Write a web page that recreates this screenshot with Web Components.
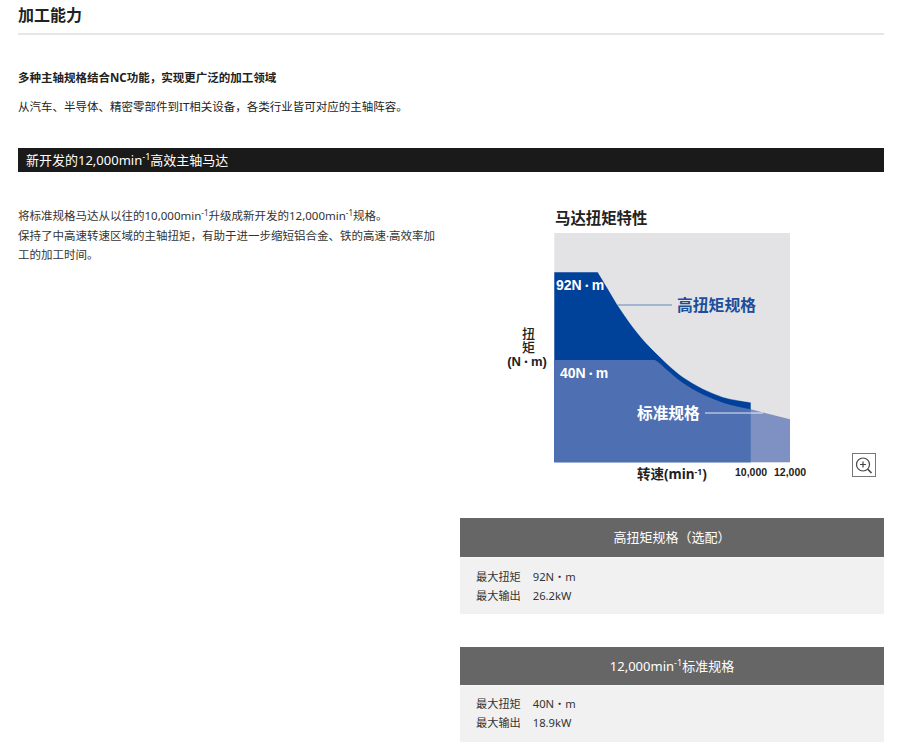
<!DOCTYPE html>
<html lang="zh-CN"><head><meta charset="utf-8"><title>加工能力</title>
<style>
html,body{margin:0;background:#fff}
body{font-family:"Noto Sans","Noto Sans CJK SC",sans-serif;color:#222;width:900px;height:755px;overflow:hidden}
</style></head><body>
<x-page>
  <x-heading>加工能力</x-heading>
  <x-lead>
    <span slot="strong">多种主轴规格结合NC功能，实现更广泛的加工领域</span>
    从汽车、半导体、精密零部件到IT相关设备，各类行业皆可对应的主轴阵容。
  </x-lead>
  <x-bar>新开发的12,000min<x-sup>-1</x-sup>高效主轴马达</x-bar>
  <x-columns>
    <x-copy slot="left">将标准规格马达从以往的10,000min<x-sup>-1</x-sup>升级成新开发的12,000min<x-sup>-1</x-sup>规格。<br>保持了中高速转速区域的主轴扭矩，有助于进一步缩短铝合金、铁的高速·高效率加工的加工时间。</x-copy>
    <x-torque-chart slot="right"></x-torque-chart>
    <x-spec-card slot="right" torque="92N・m" power="26.2kW" gap="33" head="40" pad="8.5">高扭矩规格（选配）</x-spec-card>
    <x-spec-card slot="right" torque="40N・m" power="18.9kW" head="39" pad="7.5">12,000min<x-sup>-1</x-sup>标准规格</x-spec-card>
  </x-columns>
</x-page>
<script>
function def(name, css, html){
  customElements.define(name, class extends HTMLElement{
    constructor(){super();const r=this.attachShadow({mode:'open'});r.innerHTML='<style>'+css+'</style>'+(typeof html==='function'?html(this):html);}
    connectedCallback(){
      if(typeof html==='function'){this.shadowRoot.innerHTML='<style>'+css+'</style>'+html(this);}
      if(this.getAttribute('gap'))this.style.marginBottom=this.getAttribute('gap')+'px';
    }
  });
}
const FONT='"Noto Sans","Noto Sans CJK SC",sans-serif';
const ARIAL='"Liberation Sans","Noto Sans CJK SC",sans-serif';
def('x-page',':host{display:block;padding:0 16px 0 18px;font-family:'+FONT+'}','<slot></slot>');
def('x-heading',':host{display:block;height:33px;border-bottom:2px solid #e6e6e6;font-size:16px;font-weight:700;line-height:30px;color:#222}','<slot></slot>');
def('x-sup',':host{font-size:.7em;position:relative;top:-.5em;line-height:0}','<slot></slot>');
def('x-lead',':host{display:block;padding-top:33px;height:80px;font-size:11.5px;line-height:20px;color:#222}strong{display:block;font-size:11.5px;font-weight:700;margin-bottom:9px}','<strong><slot name="strong"></slot></strong><slot></slot>');
def('x-bar',':host{display:block;height:24px;line-height:24px;background:#1a1a1a;color:#fff;font-size:13px;padding-left:8px}','<slot></slot>');
def('x-columns',':host{display:grid;grid-template-columns:424px 424px;gap:18px;padding-top:28px}.c{display:flex;flex-direction:column}','<div class="c"><slot name="left"></slot></div><div class="c"><slot name="right"></slot></div>');
def('x-copy',':host{display:block;font-size:11.5px;line-height:19.6px;color:#333;padding-top:6px}','<slot></slot>');
def('x-zoom-button',':host{display:block;position:absolute;left:392px;top:253px;width:24px;height:24px;box-sizing:border-box;border:1px solid #777;background:#fff}svg{display:block}',
 '<svg width="22" height="22" viewBox="0 0 22 22" fill="none" stroke="#444" stroke-width="1.2"><circle cx="10" cy="10.5" r="6.5"/><path d="M10 7.5v6M7 10.5h6"/><path d="M14.8 15.3L18.5 19" stroke-width="1.6"/></svg>');
const DARK='C604 282 611 294 617 304C628 321 639 336 650 347C661 358 672 369.3 683 377C696 386 710 392.7 723 397C732 400 742 400.5 750.7 402.3';
def('x-torque-chart',':host{display:block;position:relative;height:318px;font-family:'+FONT+'}svg{display:block}',
`<svg width="424" height="290" viewBox="460 200 424 290" font-family='${FONT}'>
<text x="555" y="224" font-size="15.4" font-weight="700" fill="#222">马达扭矩特性</text>
<rect x="554.3" y="233" width="235.7" height="229.3" fill="#e3e3e5"/>
<path d="M554.3 272.3H598${DARK}V462.3H554.3Z" fill="#00419a"/>
<path d="M598 272.3${DARK}" fill="none" stroke="#fff" stroke-opacity=".6" stroke-width=".8"/>
<path d="M554.3 360H655C660 363 663 366.5 667 370C672 374.3 677.5 379.2 683 383C695 391.4 709 398 723 402.7C732 405.5 742 407.5 750.7 409.3V462.3H554.3Z" fill="#4e6fb1"/>
<path d="M750.7 409.3L790 419.3V462.3H750.7Z" fill="#7f91c2"/>
<path d="M618 305H672" stroke="#5f87bc" stroke-width="1.2"/>
<path d="M705 413H763" stroke="#fff" stroke-opacity=".85" stroke-width="1"/>
<g font-family='${ARIAL}' font-weight="700" font-size="14" fill="#fff">
<text x="556" y="290">92N<tspan font-size="10">・</tspan>m</text>
<text x="560" y="378">40N<tspan font-size="10">・</tspan>m</text>
</g>
<text x="677" y="311" font-size="15.8" font-weight="700" fill="#1c4e9a">高扭矩规格</text>
<text x="637" y="419" font-size="15.7" font-weight="700" fill="#fff">标准规格</text>
<text x="528" y="327" style="writing-mode:vertical-rl;letter-spacing:.3px" font-size="13" font-weight="500" fill="#222">扭矩</text>
<text x="527" y="366" text-anchor="middle" font-family='${ARIAL}' font-size="13" font-weight="700" fill="#222">(N<tspan font-size="10">・</tspan>m)</text>
<text x="637" y="479" font-size="13.5" font-weight="700" fill="#222">转速(min<tspan dy="-4" font-size="8.5">-1</tspan><tspan dy="4">)</tspan></text>
<g font-family='${ARIAL}' font-size="10.5" font-weight="700" fill="#222">
<text x="735" y="476">10,000</text>
<text x="774" y="476">12,000</text>
</g>
</svg><x-zoom-button></x-zoom-button>`);
def('x-spec-card',':host{display:block;flex:none}header{line-height:39px;box-sizing:border-box;background:#666;color:#fff;font-size:13px;text-align:center;border-bottom:1px solid #f8f8f8}.b{background:#f1f1f1;height:56px;padding:8px 16px 0;box-sizing:border-box;font-size:11.2px;line-height:19.6px;color:#333}.r{display:flex;gap:12px}',
 el=>{const h=el.getAttribute('head')||40,p=el.getAttribute('pad')||8;return `<header style="height:${h}px"><slot></slot></header><div class="b" style="padding-top:${p}px"><div class="r"><span>最大扭矩</span><span>${el.getAttribute('torque')||''}</span></div><div class="r"><span>最大输出</span><span>${el.getAttribute('power')||''}</span></div></div>`});
</script>
</body></html>
